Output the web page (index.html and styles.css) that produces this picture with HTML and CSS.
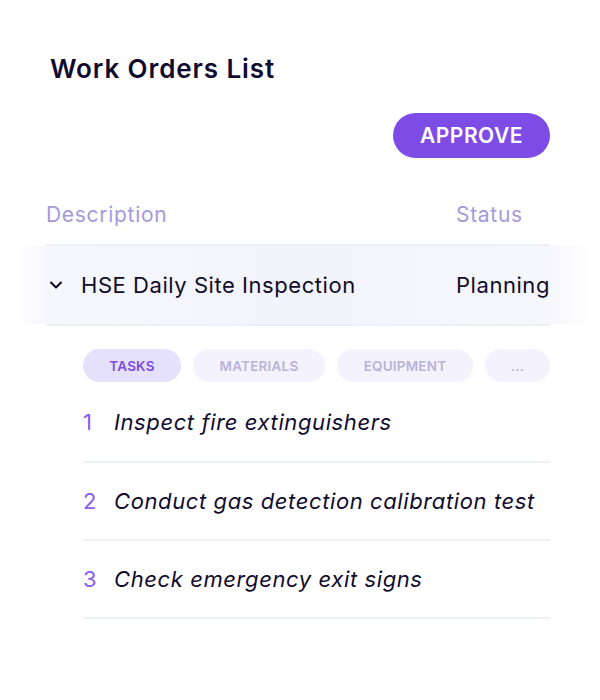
FILE: index.html
```html
<!DOCTYPE html>
<html>
<head>
<meta charset="utf-8">
<link rel="stylesheet" href="styles.css">
</head>
<body>
<div class="page">
  <h1 class="title">Work Orders List</h1>
  <div class="actions"><button class="approve">APPROVE</button></div>
  <div class="thead">
    <span class="th-desc">Description</span>
    <span class="th-status">Status</span>
  </div>
  <div class="row-main">
    <svg class="chev" width="14" height="10" viewBox="0 0 14 10"><path d="M2 2.5 L7 7.5 L12 2.5" fill="none" stroke="#0f0c29" stroke-width="2" stroke-linecap="round" stroke-linejoin="round"/></svg>
    <span class="row-desc">HSE Daily Site Inspection</span>
    <span class="row-status">Planning</span>
  </div>
  <div class="detail">
    <div class="tabs">
      <span class="tab active tab-tasks">TASKS</span>
      <span class="tab tab-mat">MATERIALS</span>
      <span class="tab tab-eq">EQUIPMENT</span>
      <span class="tab tab-more">...</span>
    </div>
    <ul class="tasks">
      <li><span class="num">1</span><span class="task">Inspect fire extinguishers</span></li>
      <li><span class="num">2</span><span class="task">Conduct gas detection calibration test</span></li>
      <li><span class="num">3</span><span class="task">Check emergency exit signs</span></li>
    </ul>
  </div>
</div>
</body>
</html>
```

FILE: styles.css
```css
* { box-sizing: border-box; }
body {
  margin: 0;
  background: #ffffff;
  font-family: Inter, "Noto Sans", sans-serif;
  color: #0f0c29;
}
.page {
  width: 504px;
  margin-left: 46px;
  padding-top: 52px;
}
.title {
  margin: 0 0 0 4px;
  font-size: 26px;
  font-weight: 600;
  line-height: 34px;
  color: #100b2e;
  letter-spacing: 0.9px;
}
.actions {
  display: flex;
  justify-content: flex-end;
  margin-top: 27px;
}
.approve {
  height: 45px;
  width: 157px;
  border: none;
  border-radius: 23px;
  background: #7d4ce6;
  color: #ffffff;
  font-family: Inter, sans-serif;
  font-size: 21px;
  font-weight: 600;
  letter-spacing: 0.5px;
  padding: 0;
}
.thead {
  display: flex;
  align-items: center;
  height: 88px;
  padding-top: 27px;
  border-bottom: 2px solid #eef0f6;
  font-size: 21px;
  letter-spacing: 0.7px;
  color: #a49ad9;
}
.th-desc { flex: 1; }
.th-status { width: 94px; }
.row-main {
  display: flex;
  align-items: center;
  height: 80px;
  padding-bottom: 1px;
  border-bottom: 2px solid #eef0f6;
  font-size: 22px;
  letter-spacing: 0.55px;
  position: relative;
  z-index: 0;
}
.row-main::before {
  content: "";
  position: absolute;
  top: 0;
  bottom: 0;
  left: -28px;
  right: -42px;
  z-index: -1;
  background: linear-gradient(90deg, rgba(246,246,253,0) 0%, #f6f6fd 5%, #f3f3fc 50%, #f6f6fd 92%, rgba(246,246,253,0) 100%);
}
.chev { margin-left: 3px; margin-right: 18px; }
.row-desc { flex: 1; }
.row-status { width: 94px; }
.detail {
  padding-left: 37px;
  padding-top: 23px;
}
.tabs {
  display: flex;
  gap: 12px;
  height: 33px;
}
.tab {
  display: flex;
  align-items: center;
  justify-content: center;
  border-radius: 17px;
  background: #f3f2fd;
  color: #b9b3d8;
  font-size: 13.5px;
  font-weight: 600;
  letter-spacing: 0.2px;
}
.tab.active { background: #e6e1fa; color: #7d4ce6; }
.tab-tasks { width: 98px; }
.tab-mat { width: 132px; }
.tab-eq { width: 136px; }
.tab-more { flex: 1; }
.tasks {
  list-style: none;
  margin: 0;
  padding: 0;
}
.tasks li {
  display: flex;
  align-items: center;
  height: 78px;
  border-bottom: 2px solid #eef1f6;
}
.tasks li:first-child { height: 81px; padding-top: 1px; }
.num {
  width: 31px;
  font-size: 22px;
  color: #8b5cf0;
}
.task {
  font-size: 22px;
  letter-spacing: 0.6px;
  font-style: italic;
  color: #100b2e;
}
```
